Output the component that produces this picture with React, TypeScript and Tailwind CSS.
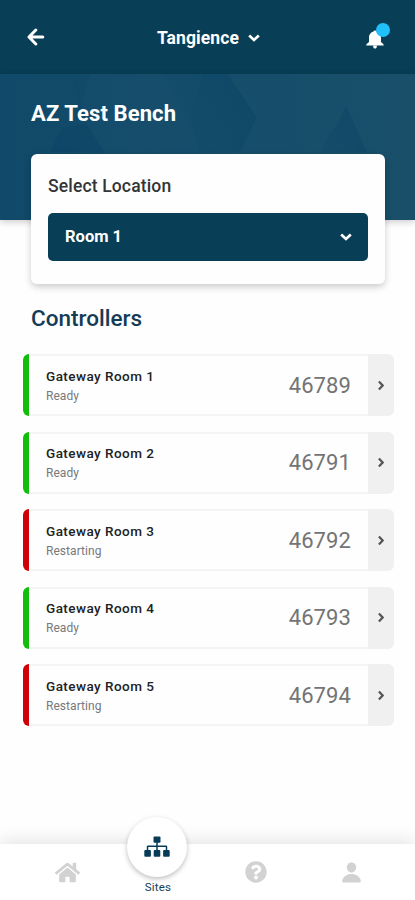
import React from "react";
import { FaHome, FaQuestionCircle } from "react-icons/fa";
import { IoPerson } from "react-icons/io5";

type Controller = { name: string; status: "Ready" | "Restarting"; code: string };

const controllers: Controller[] = [
  { name: "Gateway Room 1", status: "Ready", code: "46789" },
  { name: "Gateway Room 2", status: "Ready", code: "46791" },
  { name: "Gateway Room 3", status: "Restarting", code: "46792" },
  { name: "Gateway Room 4", status: "Ready", code: "46793" },
  { name: "Gateway Room 5", status: "Restarting", code: "46794" },
];

function Chevron({ className = "" }: { className?: string }) {
  return (
    <svg viewBox="0 0 12 8" className={className} fill="none" stroke="currentColor" strokeWidth="2.7" strokeLinejoin="miter">
      <path d="M1.2 1.5 L6 6 L10.8 1.5" />
    </svg>
  );
}

function SitemapIcon() {
  return (
    <svg viewBox="0 0 26 22" className="h-[22px] w-[26px]" fill="currentColor">
      <rect x="9.5" y="0.5" width="7" height="6.3" rx="1" />
      <rect x="0.3" y="14" width="6.6" height="6.8" rx="1" />
      <rect x="9.7" y="14" width="6.6" height="6.8" rx="1" />
      <rect x="19.1" y="14" width="6.6" height="6.8" rx="1" />
      <path d="M13 6 V14.5 M3.5 14.5 V10.8 Q3.5 10.2 4.1 10.2 H21.9 Q22.5 10.2 22.5 10.8 V14.5" fill="none" stroke="currentColor" strokeWidth="1.5" />
    </svg>
  );
}

function Header() {
  return (
    <header className="flex h-[74px] shrink-0 items-center justify-between bg-[#083e56] pr-6 pl-[27px] text-white">
      <svg viewBox="0 0 18 18" className="h-[18px] w-[18px]" fill="none" stroke="currentColor" strokeWidth="3" strokeLinecap="round" strokeLinejoin="round">
        <path d="M15.8 9 H2.5 M8.8 2 L2 9 L8.8 16" />
      </svg>
      <div className="flex items-center gap-[9px] pt-px pl-[7px]">
        <span className="text-[17.5px] leading-5 font-bold tracking-[0.1px]">Tangience</span>
        <Chevron className="h-2 w-3" />
      </div>
      <div className="relative h-7 w-[26px]">
        <svg viewBox="0 0 18 20" className="absolute top-[7px] left-[1px] h-[19px] w-[18px]" preserveAspectRatio="none" fill="currentColor">
          <path d="M9 0.5 C8.2 0.5 7.7 1 7.6 1.5 C4.6 2.3 3 4.6 3 7.8 V12 C3 13.5 0.4 13.8 0.2 16.2 H17.8 C17.6 13.8 15 13.5 15 12 V7.8 C15 4.6 13.4 2.3 10.4 1.5 C10.3 1 9.8 0.5 9 0.5 Z M7.2 16 H10.8 V17.6 C10.8 18.8 10 19.5 9 19.5 C8 19.5 7.2 18.8 7.2 17.6 Z" />
        </svg>
        <span className="absolute top-0 left-[11px] h-[14px] w-[14px] rounded-full bg-[#20c0fa]" />
      </div>
    </header>
  );
}

function HeroPattern() {
  return (
    <svg viewBox="0 0 415 146" className="absolute inset-0 h-full w-full" preserveAspectRatio="none">
      <defs>
        <linearGradient id="base" x1="0" y1="0" x2="1" y2="0">
          <stop offset="0" stopColor="#104969" />
          <stop offset="0.5" stopColor="#154d6b" />
          <stop offset="1" stopColor="#194f69" />
        </linearGradient>
        <linearGradient id="facet" x1="1" y1="0" x2="0" y2="0.6">
          <stop offset="0" stopColor="#0b4466" stopOpacity="0.7" />
          <stop offset="1" stopColor="#0b4466" stopOpacity="0.25" />
        </linearGradient>
        <linearGradient id="fade" x1="0" y1="0" x2="1" y2="0">
          <stop offset="0" stopColor="#0d4667" stopOpacity="0" />
          <stop offset="1" stopColor="#0b4466" stopOpacity="0.7" />
        </linearGradient>
      </defs>
      <rect width="415" height="146" fill="url(#base)" />
      <path d="M72 0 H164 L190 60 L150 146 H104 V78 L86 50 Z" fill="#1b506c" opacity="0.3" />
      <path d="M204 0 H228 L257 44 L240 78 H200 L190 45 Z" fill="url(#facet)" />
      <path d="M160 0 H206 L190 45 Z" fill="url(#fade)" opacity="0.4" />
      <path d="M86 50 L104 78 H50 L62 54 Z" fill="#0c4567" opacity="0.6" />
      <path d="M72 0 H90 L80 34 Z" fill="#0c4567" opacity="0.4" />
      <path d="M346 32 L367 78 H322 Q326 62 336 52 Z" fill="url(#facet)" />
    </svg>
  );
}

function ControllerRow({ name, status, code }: Controller) {
  return (
    <div className="flex h-[62px] overflow-hidden rounded-[6px]">
      <div className={`w-[6px] shrink-0 ${status === "Ready" ? "bg-[#12bd0b]" : "bg-[#d00007]"}`} />
      <div className="flex flex-1 items-center justify-between border-y-2 border-[#f4f4f4] pr-[17px] pl-[17px]">
        <div className="pt-px">
          <div className="text-[13.5px] leading-[18px] font-medium tracking-[0.45px] text-[#202224]">{name}</div>
          <div className="mt-[3px] text-[12px] leading-[17px] tracking-[0.05px] text-[#77797b]">{status}</div>
        </div>
        <div className="pt-px text-[22px] leading-6 tracking-[0.1px] text-[#747474]">{code}</div>
      </div>
      <div className="flex w-[26px] shrink-0 items-center justify-center bg-[#f0f0f0] text-[#555]">
        <Chevron className="h-[7px] w-[10px] -rotate-90" />
      </div>
    </div>
  );
}

function BottomNav() {
  return (
    <nav className="relative mt-auto flex h-[56px] shrink-0 bg-white text-[#d2d2d2] shadow-[0_-3px_18px_rgba(0,0,0,0.11)]">
      <div className="flex w-[134px] items-center justify-center pt-px">
        <FaHome className="h-[25px] w-[25px]" />
      </div>
      <div className="relative w-[48px]">
        <div className="absolute -top-[27px] -left-[7px] flex h-[60px] w-[60px] items-center justify-center rounded-full bg-white text-[#073c59] shadow-[0_2px_5px_rgba(0,0,0,0.25)]">
          <SitemapIcon />
        </div>
        <div className="pt-[35px] text-center text-[11.5px] leading-4 tracking-[0.2px] text-[#153d55]">Sites</div>
      </div>
      <div className="flex w-[147px] items-center justify-center">
        <FaQuestionCircle className="h-[22px] w-[22px]" />
      </div>
      <div className="flex w-[44px] items-center justify-center">
        <IoPerson className="h-[23px] w-[23px]" />
      </div>
    </nav>
  );
}

export default function App() {
  return (
    <div className="flex h-[900px] w-[415px] flex-col overflow-hidden bg-[#fefefe] font-['Roboto',sans-serif]">
      <Header />
      <section className="relative h-[146px] shrink-0 shadow-[0_2px_7px_rgba(0,0,0,0.2)]">
        <HeroPattern />
        <div className="relative px-[31px] pt-[27px]">
          <h1 className="text-[22px] leading-[26px] font-bold tracking-[0.1px] text-white">AZ Test Bench</h1>
          <div className="mt-[27px] h-[130px] w-[354px] rounded-[6px] bg-[#fefefe] px-[17px] pt-[21px] shadow-[0_3px_7px_rgba(0,0,0,0.2)]">
            <div className="text-[17.5px] leading-[22px] font-medium tracking-[0.15px] text-[#333536]">Select Location</div>
            <div className="mt-[16px] flex h-[48px] w-[320px] items-center justify-between rounded-[5px] bg-[#083e56] pr-4 pl-[17px] text-white">
              <span className="text-[16.5px] leading-5 font-bold">Room 1</span>
              <Chevron className="h-2 w-3" />
            </div>
          </div>
        </div>
      </section>
      <main className="pt-[83px]">
        <h2 className="pl-[31px] text-[22.5px] leading-[30px] font-medium text-[#153c56]">Controllers</h2>
        <div className="mt-[21px] flex w-[394px] flex-col gap-[15.6px] pl-[23px]">
          {controllers.map((c) => (
            <ControllerRow key={c.code} {...c} />
          ))}
        </div>
      </main>
      <BottomNav />
    </div>
  );
}
